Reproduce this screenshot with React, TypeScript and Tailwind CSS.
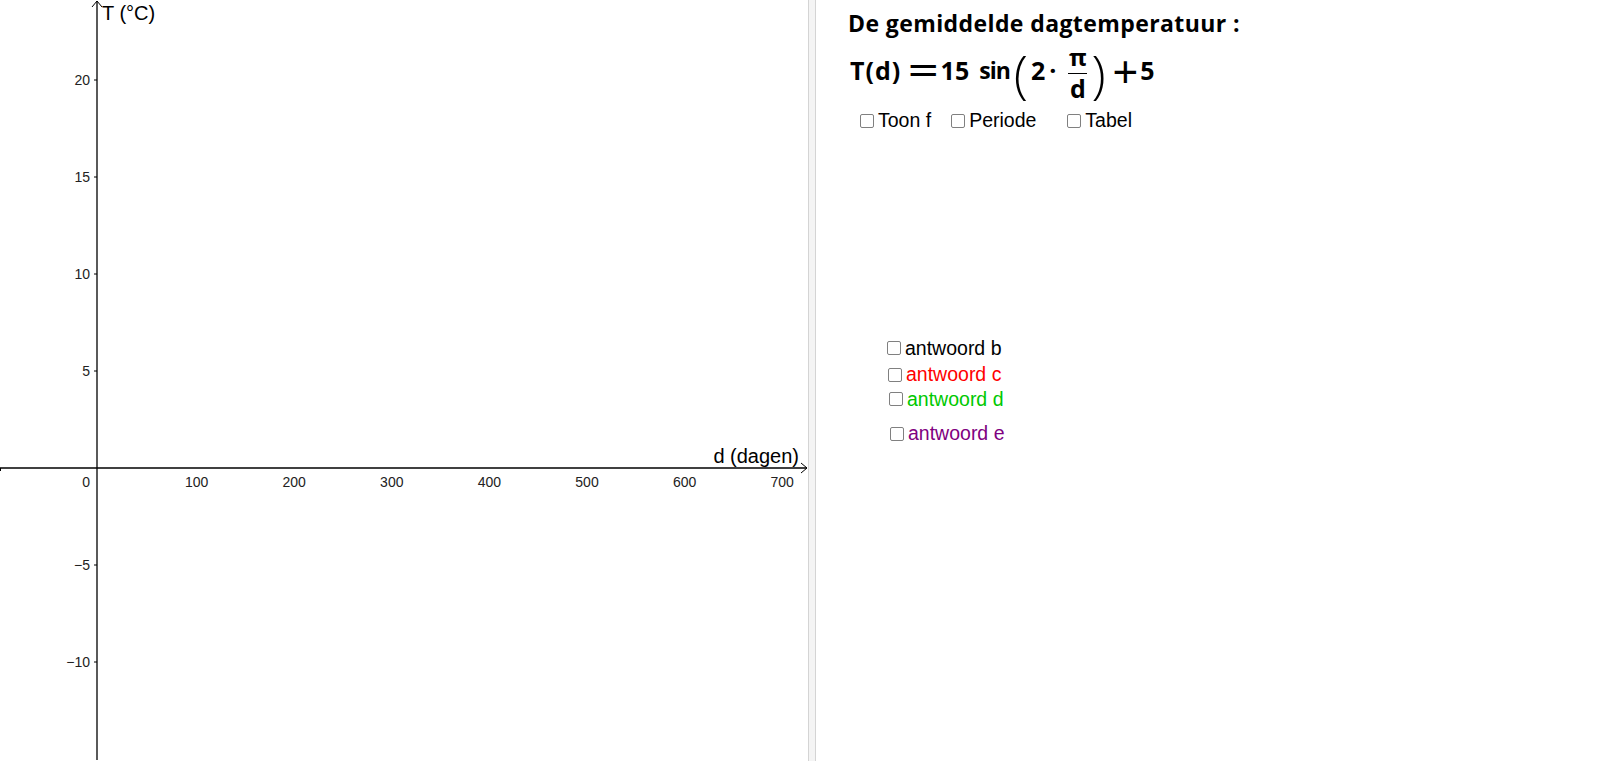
import type { ReactNode } from "react";

const ORIGIN_X = 97;
const ORIGIN_Y = 468;
const PX_PER_DAY = 0.976;
const PX_PER_DEG = 19.4;

function Graph() {
  const xs = [100, 200, 300, 400, 500, 600, 700];
  const ys = [20, 15, 10, 5, -5, -10];
  return (
    <svg width="808" height="763" className="block" style={{ fontFamily: '"Liberation Sans", Arial, sans-serif' }}>
      {/* axes */}
      <line x1="0" y1={ORIGIN_Y} x2="807" y2={ORIGIN_Y} stroke="#000" strokeWidth="1.3" />
      <polyline points={`801,${ORIGIN_Y - 5} 807,${ORIGIN_Y} 801,${ORIGIN_Y + 5}`} fill="none" stroke="#000" strokeWidth="1" />
      <line x1="0.5" y1={ORIGIN_Y} x2="0.5" y2={ORIGIN_Y + 3} stroke="#000" strokeWidth="1" />
      <line x1={ORIGIN_X} y1="1" x2={ORIGIN_X} y2="760" stroke="#000" strokeWidth="1.3" />
      <polyline points={`${ORIGIN_X - 5},7 ${ORIGIN_X},1 ${ORIGIN_X + 5},7`} fill="none" stroke="#000" strokeWidth="1" />

      {ys.map((v) => {
        const y = ORIGIN_Y - v * PX_PER_DEG;
        return (
          <g key={v}>
            <line x1={ORIGIN_X - 3} y1={y} x2={ORIGIN_X} y2={y} stroke="#000" strokeWidth="1" />
            <text x={ORIGIN_X - 7} y={y + 5} fontSize="14" textAnchor="end" fill="#222">
              {v < 0 ? `\u2212${-v}` : v}
            </text>
          </g>
        );
      })}

      <text x={ORIGIN_X - 7} y={ORIGIN_Y + 19} fontSize="14" textAnchor="end" fill="#222">
        0
      </text>
      {xs.map((v) => (
        <text key={v} x={ORIGIN_X + v * PX_PER_DAY + 2} y={ORIGIN_Y + 19} fontSize="14" textAnchor="middle" fill="#222">
          {v}
        </text>
      ))}

      <text x="102" y="20" fontSize="20" fill="#000">
        T (°C)
      </text>
      <text x="799" y="463" fontSize="20" textAnchor="end" fill="#000">
        d (dagen)
      </text>
    </svg>
  );
}

function Box() {
  return <span className="inline-block h-[14px] w-[14px] shrink-0 rounded-[2px] border-[1.5px] border-[#808080] bg-white" />;
}

function Check({ children, color, className }: { children: ReactNode; color?: string; className?: string }) {
  return (
    <div className={"flex items-center gap-[4px] text-[19.5px] leading-none " + (className ?? "")} style={color ? { color } : undefined}>
      <Box />
      <span>{children}</span>
    </div>
  );
}

const mathOp = { fontFamily: '"Liberation Sans", Arial, sans-serif' };

function Formula() {
  return (
    <div
      className="mt-[12px] flex h-[52px] items-center text-[25px] font-bold leading-none text-black"
      style={{ fontFamily: '"Open Sans", sans-serif' }}
    >
      <span className="ml-[2px] pb-[6px] tracking-[1px]">T(d)</span>
      <span className="ml-[14px] inline-block scale-x-[1.8] pb-[4px] text-[28px]" style={mathOp}>
        =
      </span>
      <span className="ml-[9px] pb-[6px]">15</span>
      <span className="ml-[10px] pb-[5px] text-[23px] tracking-[-1px]">sin</span>
      <span className="ml-[4px] text-[52px] font-light">(</span>
      <span className="ml-[3px] pb-[6px]">2</span>
      <span className="ml-[4px] pb-[6px]">·</span>
      <span className="ml-[12px] flex flex-col items-center">
        <span className="pb-[4px] text-[24px]">π</span>
        <span className="h-[1.5px] w-[19px] bg-black" />
        <span className="pt-[2px]">d</span>
      </span>
      <span className="ml-[4px] text-[52px] font-light">)</span>
      <span className="ml-[7px] pb-[3px] text-[44px] font-normal" style={mathOp}>
        +
      </span>
      <span className="ml-[2px] pb-[6px]">5</span>
    </div>
  );
}

export default function App() {
  return (
    <div className="flex h-[763px] w-[1600px] overflow-hidden bg-white" style={{ fontFamily: '"Liberation Sans", Arial, sans-serif' }}>
      <Graph />
      <div className="h-[761px] w-[8px] border-x border-[#d4d4d4] bg-[#f4f4f4]" />
      <div className="flex flex-1 flex-col pl-[32px] pt-[12px]">
        <h1 className="text-[23px] font-bold leading-none tracking-[0.4px] text-black" style={{ fontFamily: '"Open Sans", sans-serif' }}>
          De gemiddelde dagtemperatuur :
        </h1>
        <Formula />
        <div className="mt-[12px] flex items-center pl-[12px]">
          <Check>Toon f</Check>
          <Check className="ml-[20px]">Periode</Check>
          <Check className="ml-[31px]">Tabel</Check>
        </div>
        <div className="mt-[208px] flex flex-col pl-[39px]">
          <Check>antwoord b</Check>
          <Check color="#ff0000" className="ml-[1px] mt-[7px]">antwoord c</Check>
          <Check color="#00c800" className="ml-[2px] mt-[5px]">antwoord d</Check>
          <Check color="#800080" className="ml-[3px] mt-[15px]">antwoord e</Check>
        </div>
      </div>
    </div>
  );
}
